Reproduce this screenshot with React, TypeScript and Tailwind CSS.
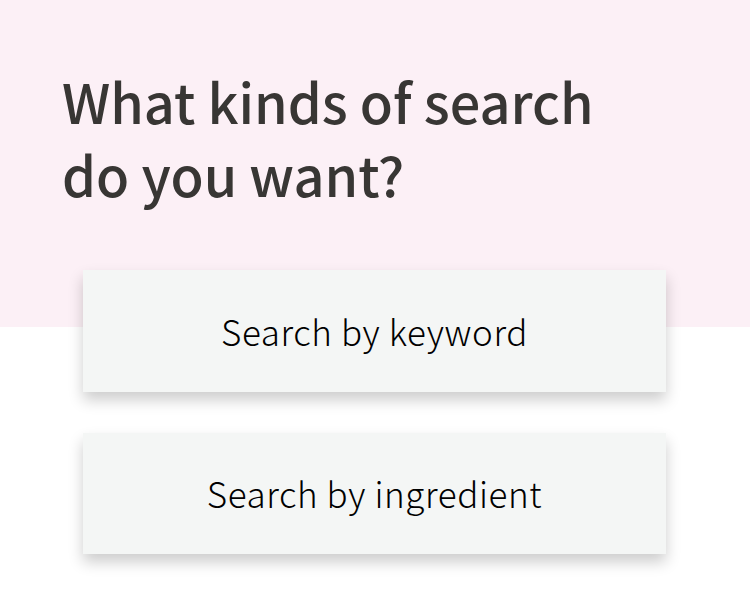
export default function App() {
  return (
    <div
      className="relative min-h-[591px] w-[750px] bg-white"
      style={{ fontFamily: '"Noto Sans CJK JP", "Noto Sans", sans-serif' }}
    >
      {/* Pink header */}
      <div className="h-[327px] bg-[#fcf0f6] px-[62px] pt-[64px]">
        <h1 className="text-[54px] font-medium leading-[73px] text-[#383634]">
          What kinds of search
          <br />
          do you want?
        </h1>
      </div>

      {/* Choices */}
      <div className="-mt-[57px] flex flex-col gap-[41px] px-[83px]">
        <button className="flex h-[122px] w-[583px] items-center justify-center bg-[#f4f6f5] text-[35px] font-light tracking-[0.6px] text-black shadow-[0_8px_14px_rgba(0,0,0,0.2)]">
          Search by keyword
        </button>
        <button className="flex h-[121px] w-[583px] items-center justify-center bg-[#f4f6f5] text-[35px] font-light tracking-[0.6px] text-black shadow-[0_8px_14px_rgba(0,0,0,0.2)]">
          Search by ingredient
        </button>
      </div>
    </div>
  )
}
